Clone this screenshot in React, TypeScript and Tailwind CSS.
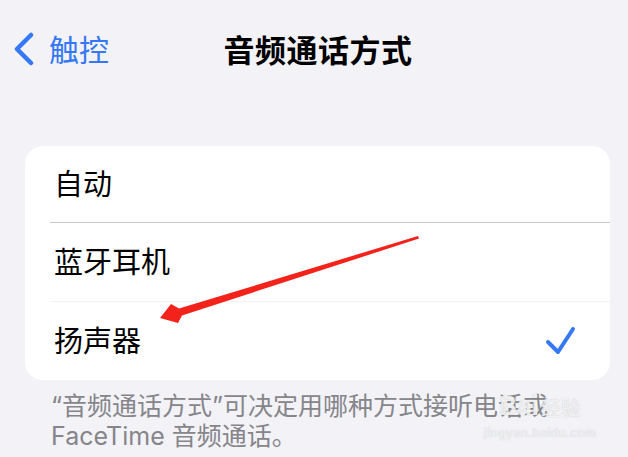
import React from 'react';

const font = { fontFamily: '"Inter", "Noto Sans CJK SC", sans-serif' };

const options = ['自动', '蓝牙耳机', '扬声器'];

const App: React.FC = () => {
  const selected = 2;
  return (
    <div className="relative w-[628px] h-[457px] overflow-hidden bg-[#f2f2f7] text-black" style={font}>
      {/* 导航栏 */}
      <div className="grid grid-cols-[1fr_auto_1fr] items-center h-[100px]">
        <div className="flex items-center pl-[12px] text-[#3478f6]">
          <svg width="24" height="36" viewBox="0 0 24 36" className="shrink-0">
            <polyline points="19,3 5,17 19,31" fill="none" stroke="#3478f6" strokeWidth="4.5" strokeLinecap="round" strokeLinejoin="round" />
          </svg>
          <span className="ml-[13px] text-[30px] leading-none">触控</span>
        </div>
        <div className="pl-[8px] text-[31px] font-bold leading-none tracking-[0.5px]">音频通话方式</div>
        <div />
      </div>

      {/* 选项列表 */}
      <div className="mt-[46px] ml-[25px] mr-[18px] bg-white rounded-[18px] overflow-hidden">
        {options.map((label, i) => (
          <div key={label} className={`flex items-center justify-between pl-[29px] pr-[33px] ${i === 0 ? 'h-[76px]' : 'h-[78px]'}`}>
            <span className="text-[29px] leading-none">{label}</span>
            {i === selected && (
              <svg width="32" height="32" viewBox="0 0 32 32">
                <polyline points="3,17 13,27 28,4" fill="none" stroke="#3478f6" strokeWidth="4" strokeLinecap="round" strokeLinejoin="round" />
              </svg>
            )}
          </div>
        )).reduce<React.ReactNode[]>((acc, row, i) => {
          if (i > 0) {
            acc.push(
              <div key={`d${i}`} className={`ml-[25px] h-px ${i === 1 ? 'bg-[#c8c8cc]' : 'bg-[#f2f2f4]'}`} />
            );
          }
          acc.push(row);
          return acc;
        }, [])}
      </div>

      {/* 说明文字 */}
      <p className="mt-[11px] pl-[51px] pr-[40px] text-[25px] leading-[30px] text-[#85858a]">
        “音频通话方式”可决定用哪种方式接听电话或FaceTime 音频通话。
      </p>

      {/* 水印 */}
      <div className="absolute left-[484px] top-[393px] flex flex-col items-center text-white/80 pointer-events-none" style={{ textShadow: '0 0 1px rgba(120,120,120,0.5)' }}>
        <div className="flex items-end text-[26px] font-bold leading-none">
          <span>Bai</span>
          <span className="text-[20px] font-normal ml-[2px]">经验</span>
        </div>
        <span className="text-[12px] leading-none mt-[8px] tracking-[0.5px]">jingyan.baidu.com</span>
      </div>

      {/* 红色箭头标注 */}
      <svg className="absolute inset-0 pointer-events-none" width="628" height="457" viewBox="0 0 628 457">
        <polygon
          points="418,236 419,238.5 182,315.5 178,323 160,318 171,304 179,308.5"
          fill="#f3221a"
        />
      </svg>
    </div>
  );
};

export default App;
